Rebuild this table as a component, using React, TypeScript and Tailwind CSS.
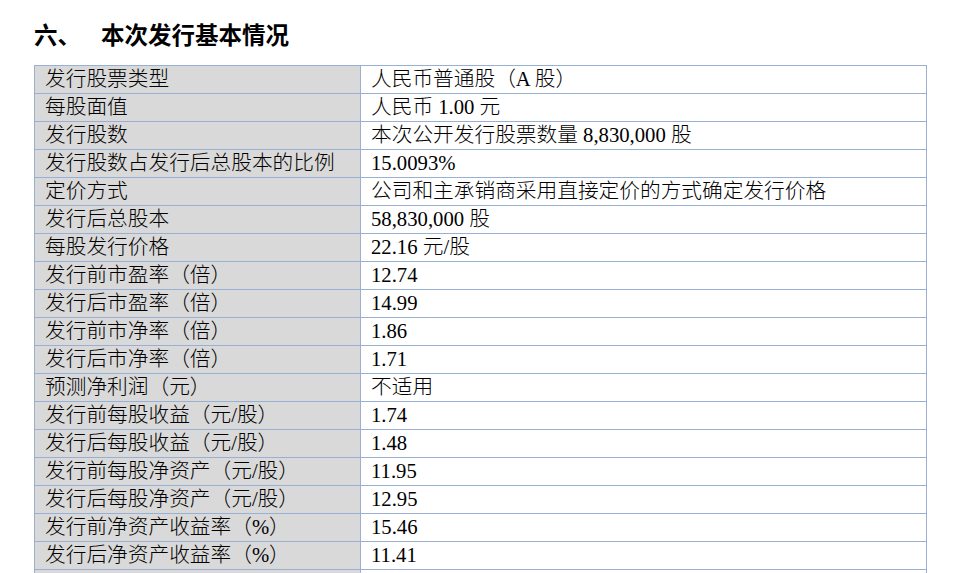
import React from 'react';

const rows: [string, string][] = [
    ['发行股票类型', '人民币普通股（A 股）'],
    ['每股面值', '人民币 1.00 元'],
    ['发行股数', '本次公开发行股票数量 8,830,000 股'],
    ['发行股数占发行后总股本的比例', '15.0093%'],
    ['定价方式', '公司和主承销商采用直接定价的方式确定发行价格'],
    ['发行后总股本', '58,830,000 股'],
    ['每股发行价格', '22.16 元/股'],
    ['发行前市盈率（倍）', '12.74'],
    ['发行后市盈率（倍）', '14.99'],
    ['发行前市净率（倍）', '1.86'],
    ['发行后市净率（倍）', '1.71'],
    ['预测净利润（元）', '不适用'],
    ['发行前每股收益（元/股）', '1.74'],
    ['发行后每股收益（元/股）', '1.48'],
    ['发行前每股净资产（元/股）', '11.95'],
    ['发行后每股净资产（元/股）', '12.95'],
    ['发行前净资产收益率（%）', '15.46'],
    ['发行后净资产收益率（%）', '11.41'],
];

export default function App() {
    return (
        <div
            className="w-[960px] h-[573px] overflow-hidden bg-white text-black"
            style={{ fontFamily: '"Liberation Serif", "Noto Sans CJK SC", serif' }}
        >
            <h2 className="flex items-center h-[30px] mt-[22px] pl-[34px] text-[23.5px] font-bold leading-none">
                <span className="w-[67px]">六、</span>
                <span>本次发行基本情况</span>
            </h2>

            <table className="ml-[34px] mt-[13px] w-[893px] border-collapse text-[20.7px] leading-none font-light">
                <tbody>
                    {rows.map(([label, value]) => (
                        <tr key={label} className="h-[28px]">
                            <td className="w-[326px] border-[1.5px] border-[#98b0d4] bg-[#d9d9d9] pl-[10px] p-0">
                                {label}
                            </td>
                            <td className="border-[1.5px] border-[#98b0d4] bg-white pl-[10px] p-0">{value}</td>
                        </tr>
                    ))}
                    <tr className="h-[28px]">
                        <td className="border-[1.5px] border-[#98b0d4] bg-[#d9d9d9] p-0"></td>
                        <td className="border-[1.5px] border-[#98b0d4] bg-white p-0"></td>
                    </tr>
                </tbody>
            </table>
        </div>
    );
}
